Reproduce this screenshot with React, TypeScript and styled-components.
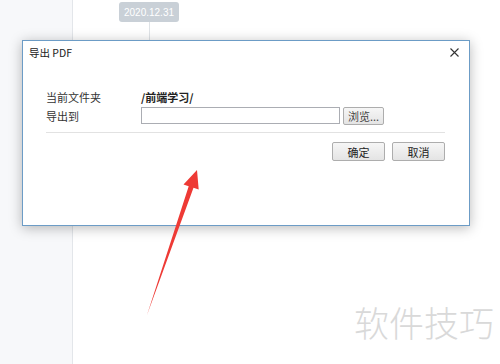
import React from 'react';
import styled, { createGlobalStyle } from 'styled-components';

const GlobalStyle = createGlobalStyle`
  html, body {
    margin: 0;
    padding: 0;
    background: #ffffff;
  }
  body {
    font-family: "Noto Sans CJK SC", "Noto Sans", "Liberation Sans", sans-serif;
    color: #333333;
  }
`;

const Screen = styled.div`
  position: relative;
  display: flex;
  width: 500px;
  height: 364px;
  overflow: hidden;
  background: #ffffff;
`;

const Sidebar = styled.div`
  width: 72px;
  flex-shrink: 0;
  background: #f7f8fa;
  border-right: 1px solid #e3e6ea;
`;

const Timeline = styled.div`
  flex: 1;
  display: flex;
  flex-direction: column;
  align-items: flex-start;
  padding: 2px 0 0 46px;
`;

const DateBadge = styled.div`
  display: flex;
  align-items: center;
  justify-content: center;
  width: 60px;
  height: 20px;
  border-radius: 3px;
  background: #c9d0d7;
  color: #ffffff;
  font-family: "Liberation Sans", "Noto Sans", sans-serif;
  font-size: 10px;
`;

const TimelineLine = styled.div`
  width: 1px;
  height: 40px;
  margin-left: 30px;
  background: #dfe3e7;
`;

const Dialog = styled.div`
  position: absolute;
  left: 22px;
  top: 40px;
  width: 446px;
  height: 184px;
  background: #ffffff;
  border: 1px solid #6c9cc6;
  box-shadow: 0 2px 12px rgba(0, 0, 0, 0.28);
  display: flex;
  flex-direction: column;
`;

const TitleBar = styled.div`
  display: flex;
  align-items: center;
  justify-content: space-between;
  height: 23px;
  padding: 0 8px 0 6px;
  font-size: 10.5px;
  color: #222222;
`;

const CloseIcon = styled.svg`
  width: 9px;
  height: 9px;
  margin-right: 2px;
`;

const Body = styled.div`
  display: flex;
  flex-direction: column;
  padding: 23px 24px 0 23px;
`;

const Row = styled.div`
  display: flex;
  align-items: center;
  height: 19px;
  font-size: 11px;
`;

const Label = styled.div`
  width: 95px;
  color: #333333;
`;

const Value = styled.div`
  font-weight: 700;
  color: #222222;
`;

const PathInput = styled.div`
  width: 197px;
  height: 15px;
  border: 1px solid #abadb3;
  background: #ffffff;
`;

const Button = styled.div<{ $w: number; $h: number }>`
  display: flex;
  align-items: center;
  justify-content: center;
  width: ${(p) => p.$w - 2}px;
  height: ${(p) => p.$h - 2}px;
  border: 1px solid #adadad;
  border-radius: 2px;
  background: linear-gradient(#f6f6f6, #e4e4e4);
  font-size: 11px;
  color: #222222;
`;

const BrowseButton = styled(Button)`
  margin-left: 3px;
  color: #444444;
`;

const Divider = styled.div`
  height: 1px;
  margin-top: 7px;
  background: #e2e2e2;
`;

const Actions = styled.div`
  display: flex;
  justify-content: flex-end;
  gap: 7px;
  margin-top: 9px;
`;

const Arrow = styled.svg`
  position: absolute;
  left: 0;
  top: 0;
  width: 500px;
  height: 364px;
  pointer-events: none;
`;

const Watermark = styled.div`
  position: absolute;
  left: 354px;
  top: 296px;
  font-size: 35px;
  color: #d9d9d9;
  font-family: "Noto Sans CJK SC", sans-serif;
  font-weight: 300;
`;

export default function App() {
  return (
    <>
      <GlobalStyle />
      <Screen>
        <Sidebar />
        <Timeline>
          <DateBadge>2020.12.31</DateBadge>
          <TimelineLine />
        </Timeline>

        <Dialog>
          <TitleBar>
            <span>导出 PDF</span>
            <CloseIcon viewBox="0 0 9 9">
              <path d="M0.5 0.5 L8.5 8.5 M8.5 0.5 L0.5 8.5" stroke="#333" strokeWidth="1.1" />
            </CloseIcon>
          </TitleBar>
          <Body>
            <Row>
              <Label>当前文件夹</Label>
              <Value>/前端学习/</Value>
            </Row>
            <Row>
              <Label>导出到</Label>
              <PathInput />
              <BrowseButton $w={41} $h={18}>浏览...</BrowseButton>
            </Row>
            <Divider />
            <Actions>
              <Button $w={53} $h={19}>确定</Button>
              <Button $w={53} $h={19}>取消</Button>
            </Actions>
          </Body>
        </Dialog>

        <Arrow viewBox="0 0 500 364">
          <polygon
            points="147,315 188.7,186.2 183.5,184.4 197,170 198.7,189.6 193.5,187.8"
            fill="#ee3a35"
          />
        </Arrow>

        <Watermark>软件技巧</Watermark>
      </Screen>
    </>
  );
}
